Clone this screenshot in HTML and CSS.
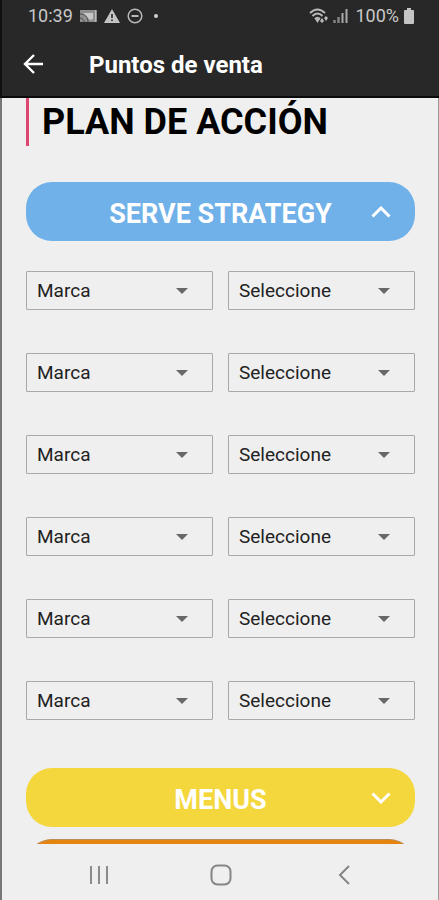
FILE: index.html
```html
<!DOCTYPE html>
<html lang="es">
<head>
<meta charset="utf-8">
<meta name="viewport" content="width=device-width, initial-scale=1">
<title>Puntos de venta</title>
<link rel="stylesheet" href="styles.css">
</head>
<body>
<div class="app">
  <header class="top">
    <div class="status">
      <span>10:39</span>
      <svg class="cast" width="17" height="14" viewBox="0 0 17 14" aria-hidden="true"><path d="M0 1h17v12H0z" fill="#8f8f8f"/><path d="M3 4h10v6l-3 1z" fill="#c8c8c8"/><path d="M0 5c5 0 8 3 8 8M0 9c2 0 4 2 4 4" fill="none" stroke="#4a4a4a"/><path d="M15.500 1v12" stroke="#bbb"/></svg>
      <svg width="16" height="14" viewBox="0 0 16 14" aria-hidden="true"><path d="M8 0l8 14H0z" fill="#c4c4c4"/><path d="M8 5v4M8 10.500v1.500" stroke="#282828" stroke-width="1.600"/></svg>
      <svg class="dnd" width="16" height="16" viewBox="0 0 16 16" aria-hidden="true" fill="none" stroke="#b9b9b9" stroke-width="1.500"><circle cx="8" cy="8" r="6.800"/><path d="M4.500 8h7" stroke-width="2"/></svg>
      <span class="dot"></span>
      <svg class="wifi" width="20" height="16" viewBox="0 0 20 16" aria-hidden="true"><g fill="none" stroke="#b9b9b9" stroke-width="2"><path d="M1 5q7.500-7 15 0M3.500 8q5-5 10 0M6 11q2.500-2.500 5 0"/></g><path d="M6 11h5l-2.500 4zM11 13l2-3 2 3-2 2zM15 10l2-2 2 2-2 3z" fill="#b9b9b9"/></svg>
      <svg width="15" height="14" viewBox="0 0 15 14" aria-hidden="true"><path d="M1.500 14v-3M5.500 14v-6" stroke="#858585" stroke-width="2.400"/><path d="M9.500 14V4M13.500 14V0" stroke="#aaa" stroke-width="2"/></svg>
      <span class="percent">100%</span>
      <svg width="10" height="16" viewBox="0 0 10 16" aria-hidden="true"><path d="M3 0h4v2h2q1 0 1 1v12q0 1-1 1H1q-1 0-1-1V3q0-1 1-1h2z" fill="#c4c4c4"/></svg>
    </div>
    <div class="appbar">
      <button class="back" type="button" aria-label="Volver"><svg width="20" height="20" viewBox="0 0 20 20" fill="none" stroke="#fff" stroke-width="2.400" aria-hidden="true"><path d="M20 10H2M11 1l-9 9 9 9"/></svg></button>
      <h1 class="screen-name">Puntos de venta</h1>
    </div>
  </header>
  <main class="content">
    <h2 class="title">PLAN DE ACCIÓN</h2>
    <button class="section blue" type="button" aria-expanded="true"><span>SERVE STRATEGY</span><svg width="20" height="12" viewBox="0 0 20 12" aria-hidden="true"><path d="M1.500 10.500L10 2l8.500 8.500"/></svg></button>
    <div class="fields">
      <div class="field"><select aria-label="Marca 1"><option>Marca</option></select><svg class="caret" viewBox="0 0 12 6" aria-hidden="true"><path d="M0 0h12L6 6z"/></svg></div>
      <div class="field"><select aria-label="Opción 1"><option>Seleccione</option></select><svg class="caret" viewBox="0 0 12 6" aria-hidden="true"><path d="M0 0h12L6 6z"/></svg></div>
      <div class="field"><select aria-label="Marca 2"><option>Marca</option></select><svg class="caret" viewBox="0 0 12 6" aria-hidden="true"><path d="M0 0h12L6 6z"/></svg></div>
      <div class="field"><select aria-label="Opción 2"><option>Seleccione</option></select><svg class="caret" viewBox="0 0 12 6" aria-hidden="true"><path d="M0 0h12L6 6z"/></svg></div>
      <div class="field"><select aria-label="Marca 3"><option>Marca</option></select><svg class="caret" viewBox="0 0 12 6" aria-hidden="true"><path d="M0 0h12L6 6z"/></svg></div>
      <div class="field"><select aria-label="Opción 3"><option>Seleccione</option></select><svg class="caret" viewBox="0 0 12 6" aria-hidden="true"><path d="M0 0h12L6 6z"/></svg></div>
      <div class="field"><select aria-label="Marca 4"><option>Marca</option></select><svg class="caret" viewBox="0 0 12 6" aria-hidden="true"><path d="M0 0h12L6 6z"/></svg></div>
      <div class="field"><select aria-label="Opción 4"><option>Seleccione</option></select><svg class="caret" viewBox="0 0 12 6" aria-hidden="true"><path d="M0 0h12L6 6z"/></svg></div>
      <div class="field"><select aria-label="Marca 5"><option>Marca</option></select><svg class="caret" viewBox="0 0 12 6" aria-hidden="true"><path d="M0 0h12L6 6z"/></svg></div>
      <div class="field"><select aria-label="Opción 5"><option>Seleccione</option></select><svg class="caret" viewBox="0 0 12 6" aria-hidden="true"><path d="M0 0h12L6 6z"/></svg></div>
      <div class="field"><select aria-label="Marca 6"><option>Marca</option></select><svg class="caret" viewBox="0 0 12 6" aria-hidden="true"><path d="M0 0h12L6 6z"/></svg></div>
      <div class="field"><select aria-label="Opción 6"><option>Seleccione</option></select><svg class="caret" viewBox="0 0 12 6" aria-hidden="true"><path d="M0 0h12L6 6z"/></svg></div>
    </div>
    <button class="section yellow" type="button" aria-expanded="false"><span>MENUS</span><svg width="20" height="12" viewBox="0 0 20 12" aria-hidden="true"><path d="M1.500 1.500L10 10l8.500-8.500"/></svg></button>
    <div class="section orange"></div>
  </main>
  <nav class="nav" aria-label="Sistema">
    <button type="button" aria-label="Recientes"><svg width="20" height="20" viewBox="0 0 20 20" stroke="#8c8c8c" stroke-width="2" aria-hidden="true"><path d="M2 1v18M10 1v18M18 1v18"/></svg></button>
    <button type="button" aria-label="Inicio"><svg width="22" height="22" viewBox="0 0 22 22" fill="none" stroke="#858585" stroke-width="2" aria-hidden="true"><rect x="1.500" y="1.500" width="19" height="19" rx="6"/></svg></button>
    <button type="button" aria-label="Atrás"><svg width="12" height="20" viewBox="0 0 12 20" fill="none" stroke="#858585" stroke-width="2" aria-hidden="true"><path d="M11 1L2 10l9 9"/></svg></button>
  </nav>
</div>
</body>
</html>
```
FILE: styles.css
```css
* {
  box-sizing: border-box;
}

body {
  margin: 0;
  background: #efefef;
  font-family: Roboto, "Liberation Sans", sans-serif;
}

button {
  padding: 0;
  border: 0;
  background: none;
  font: inherit;
}

svg {
  display: block;
  flex: none;
}

.app {
  display: flex;
  flex-direction: column;
  height: 100vh;
  border-left: 2px solid #777;
  border-right: 1px solid #999;
}

.top {
  flex: none;
  margin: 0 -1px 0 -2px;
  border-left: 2px solid #111;
  border-bottom: 2px solid #0a0a0a;
  background: #282828;
}

.status {
  display: flex;
  align-items: center;
  height: 32px;
  padding: 0 25px 0 26px;
  gap: 7px;
  color: #c8c8c8;
  font-size: 18px;
  line-height: 32px;
}

.dot {
  width: 4px;
  height: 4px;
  margin-left: 4px;
  border-radius: 50%;
  background: #d0d0d0;
}

.wifi {
  margin-left: auto;
}

.status .wifi + svg {
  margin-left: -3px;
}

.percent + svg {
  margin-left: -2px;
}

.appbar {
  display: flex;
  align-items: center;
  height: 64px;
  padding: 0 21px;
  gap: 46px;
}

.screen-name {
  margin: 0;
  padding-top: 2px;
  color: #fff;
  font-size: 24px;
  font-weight: 700;
  line-height: 32px;
}

.content {
  flex: 1;
  min-height: 0;
  padding: 0 23px 0 24px;
  overflow: hidden;
}

.title {
  margin: 0 0 36px;
  padding-left: 13px;
  border-left: 3px solid #dc476f;
  color: #000;
  font-size: 36px;
  font-weight: 700;
  line-height: 48px;
}

.section {
  display: flex;
  align-items: center;
  width: 100%;
  height: 59px;
  padding: 0 24px 0 44px;
  border-radius: 26px;
  color: #fff;
  font-size: 27px;
  font-weight: 700;
}

.section span {
  flex: 1;
  padding-top: 4px;
  text-align: center;
}

.section path {
  fill: none;
  stroke: #fff;
  stroke-width: 3;
}

.blue {
  background: #70b1e9;
}

.yellow {
  background: #f4d73c;
}

.orange {
  margin-top: 12px;
  border-top: 1px solid #b98b55;
  background: #e5840f;
}

.fields {
  display: grid;
  grid-template-columns: 1fr 1fr;
  gap: 43px 15px;
  margin: 30px 0 48px;
}

.field {
  display: grid;
  align-items: center;
}

.field > * {
  grid-area: 1 / 1;
}

.field select {
  width: 100%;
  height: 39px;
  padding: 0 10px;
  border: 1px solid #a8a8a8;
  border-radius: 1px;
  background: transparent;
  color: #222;
  font: 19px/24px Roboto, "Liberation Sans", sans-serif;
  appearance: none;
}

.caret {
  justify-self: end;
  width: 12px;
  height: 6px;
  margin-right: 25px;
  fill: #686868;
  pointer-events: none;
}

.nav {
  display: flex;
  flex: none;
  align-items: center;
  justify-content: space-around;
  height: 56px;
  padding: 6px 33px 0 36px;
}

.nav button {
  display: flex;
  justify-content: center;
  width: 48px;
}
```
